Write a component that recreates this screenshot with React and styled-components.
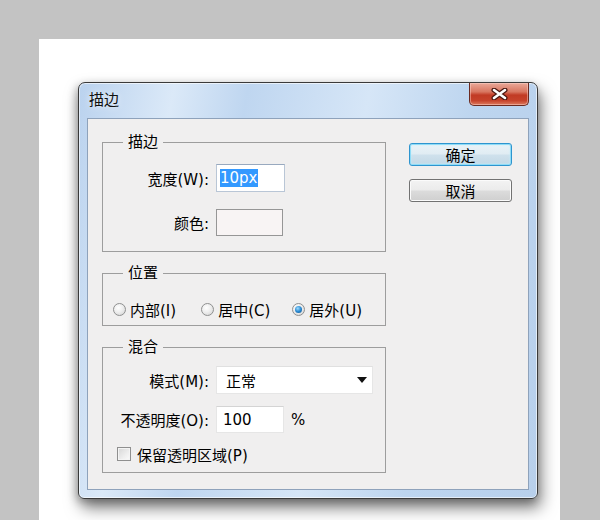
import styled, { createGlobalStyle } from "styled-components";

const GlobalStyle = createGlobalStyle`
  html, body {
    margin: 0;
    padding: 0;
    background: #c3c3c3;
  }
  body {
    font-family: "DejaVu Sans", "Noto Sans CJK SC", sans-serif;
    font-size: 15px;
    color: #000;
  }
`;

const Screen = styled.div`
  width: 600px;
  height: 520px;
  box-sizing: border-box;
  padding: 39px 40px 0 39px;
  background: #c3c3c3;
  overflow: hidden;
`;

const Paper = styled.div`
  height: 481px;
  box-sizing: border-box;
  padding: 43px 0 0 39px;
  background: #fff;
`;

const Window = styled.div`
  width: 460px;
  height: 417px;
  box-sizing: border-box;
  display: flex;
  flex-direction: column;
  padding: 0 8px 8px;
  border: 1px solid #3a3a3a;
  border-radius: 7px 7px 6px 6px;
  background: linear-gradient(
    100deg,
    #bad2ee 0%,
    #dbe9f8 18%,
    #bfd6f0 32%,
    #d6e6f7 55%,
    #bdd5ef 75%,
    #b8d0ec 100%
  );
  box-shadow: 3px 9px 16px rgba(0, 0, 0, 0.5), -2px 3px 9px rgba(0, 0, 0, 0.25),
    inset 0 0 0 1px rgba(255, 255, 255, 0.6);
`;

const TitleBar = styled.div`
  height: 35px;
  display: flex;
  justify-content: space-between;
  align-items: flex-start;
`;

const Title = styled.div`
  padding-left: 2px;
  line-height: 35px;
  font-size: 15px;
  color: #111;
  text-shadow: 0 0 6px rgba(255, 255, 255, 0.9);
`;

const CloseButton = styled.div`
  width: 60px;
  height: 23px;
  box-sizing: border-box;
  display: flex;
  align-items: center;
  justify-content: center;
  border: 1px solid #6b2a20;
  border-top: none;
  border-radius: 0 0 5px 5px;
  background: linear-gradient(
    #eaa999 0%,
    #d87660 40%,
    #c13a24 55%,
    #c6432b 80%,
    #dd7b5f 100%
  );
  box-shadow: inset 0 0 0 1px rgba(255, 220, 210, 0.45);
`;

const Client = styled.div`
  flex: 1;
  display: flex;
  align-items: flex-start;
  padding: 13px 0 0 14px;
  border: 1px solid #8ea2bb;
  background: #f0efef;
`;

const LeftColumn = styled.div`
  width: 284px;
  display: flex;
  flex-direction: column;
`;

const Group = styled.fieldset`
  margin: ${(p) => p.$mt || 0}px 0 0;
  padding: ${(p) => p.$pad};
  min-width: 0;
  border: 1px solid #9d9d9d;
  display: flex;
  flex-direction: column;
`;

const Legend = styled.legend`
  margin-left: 20px;
  padding: 0 5px;
  line-height: 20px;
  font-size: 15px;
`;

const Row = styled.div`
  height: ${(p) => p.$h}px;
  margin-top: ${(p) => p.$mt || 0}px;
  padding-left: ${(p) => p.$pl || 0}px;
  display: flex;
  align-items: center;
`;

const Label = styled.span`
  width: 106px;
  margin-right: 7px;
  text-align: right;
  white-space: nowrap;
`;

const Field = styled.div`
  width: ${(p) => p.$w}px;
  height: ${(p) => p.$h}px;
  box-sizing: border-box;
  display: flex;
  align-items: center;
  padding-left: ${(p) => p.$pl || 5}px;
  border: 1px solid ${(p) => p.$border || "#dcdcdc"};
  border-top-color: ${(p) => p.$borderTop || p.$border || "#c8c8c8"};
  background: ${(p) => p.$bg || "#fff"};
  white-space: nowrap;
`;

const Selected = styled.span`
  background: #3399ff;
  color: #fff;
  line-height: 18px;
`;

const Unit = styled.span`
  margin-left: 7px;
`;

const Select = styled(Field)`
  justify-content: space-between;
  padding-right: 5px;
`;

const RadioItem = styled.label`
  display: flex;
  align-items: center;
  margin-right: ${(p) => p.$mr || 0}px;
  white-space: nowrap;
`;

const Radio = styled.span`
  position: relative;
  width: 13px;
  height: 13px;
  box-sizing: border-box;
  margin-right: 4px;
  border-radius: 50%;
  border: 1px solid #8f9090;
  background: radial-gradient(circle at 40% 35%, #ffffff 0%, #eeeeee 45%, #cfcfcf 100%);

  &::after {
    content: "";
    display: ${(p) => (p.$checked ? "block" : "none")};
    position: absolute;
    left: 2px;
    top: 2px;
    width: 7px;
    height: 7px;
    border-radius: 50%;
    background: radial-gradient(circle at 40% 35%, #9fdcff 0%, #2a8ad2 50%, #0f4f86 100%);
  }
`;

const Checkbox = styled.span`
  width: 14px;
  height: 14px;
  box-sizing: border-box;
  margin-right: 6px;
  border: 1px solid #8f8f8f;
  background: linear-gradient(135deg, #d6d6d6 0%, #eeeeee 60%, #fbfbfb 100%);
  box-shadow: inset 0 0 0 1px #f4f4f4;
`;

const RightColumn = styled.div`
  margin: 11px 0 0 23px;
  display: flex;
  flex-direction: column;
  gap: 13px;
`;

const Button = styled.div`
  width: 103px;
  height: 23px;
  box-sizing: border-box;
  display: flex;
  align-items: center;
  justify-content: center;
  border-radius: 3px;
  border: 1px solid ${(p) => (p.$default ? "#2e95cf" : "#727272")};
  background: ${(p) =>
    p.$default
      ? "linear-gradient(#eaf3f8 0%, #e0ecf3 48%, #cfe1ec 52%, #c2d8e6 100%)"
      : "linear-gradient(#f3f3f3 0%, #ebebeb 48%, #dcdcdc 52%, #cfcfcf 100%)"};
  box-shadow: ${(p) =>
    p.$default
      ? "inset 0 0 0 1px #8fdcf7, inset 0 0 2px 1px #c4eefc"
      : "inset 0 0 0 1px #fbfbfb"};
  font-size: 15px;
`;

function CloseIcon() {
  return (
    <svg width="17" height="12" viewBox="0 0 17 12">
      <path d="M3 2 L14 10 M14 2 L3 10" stroke="#4a1710" strokeWidth="5" strokeLinecap="round" />
      <path d="M3 2 L14 10 M14 2 L3 10" stroke="#ffffff" strokeWidth="2.6" strokeLinecap="round" />
    </svg>
  );
}

function DropArrow() {
  return (
    <svg width="10" height="6" viewBox="0 0 10 6">
      <path d="M0 0 H10 L5 6 Z" fill="#111" />
    </svg>
  );
}

export default function App() {
  return (
    <>
      <GlobalStyle />
      <Screen>
        <Paper>
          <Window>
            <TitleBar>
              <Title>描边</Title>
              <CloseButton>
                <CloseIcon />
              </CloseButton>
            </TitleBar>
            <Client>
              <LeftColumn>
                <Group $pad="12px 0 15px 0">
                  <Legend>描边</Legend>
                  <Row $h={28}>
                    <Label>宽度(W):</Label>
                    <Field $w={69} $h={28} $pl={3} $border="#b9c6d6" $borderTop="#98a9bf">
                      <Selected>10px</Selected>
                    </Field>
                  </Row>
                  <Row $h={27} $mt={17}>
                    <Label>颜色:</Label>
                    <Field $w={67} $h={27} $border="#969696" $bg="#f8f4f4" />
                  </Row>
                </Group>

                <Group $mt={11} $pad="16px 0 6px 0">
                  <Legend>位置</Legend>
                  <Row $h={20} $pl={10}>
                    <RadioItem $mr={25}>
                      <Radio />
                      内部(I)
                    </RadioItem>
                    <RadioItem $mr={22}>
                      <Radio />
                      居中(C)
                    </RadioItem>
                    <RadioItem>
                      <Radio $checked />
                      居外(U)
                    </RadioItem>
                  </Row>
                </Group>

                <Group $mt={11} $pad="9px 0 8px 0">
                  <Legend>混合</Legend>
                  <Row $h={28}>
                    <Label>模式(M):</Label>
                    <Select $w={157} $h={28} $pl={9} $border="#e6e6e6" $borderTop="#e0e0e0">
                      正常
                      <DropArrow />
                    </Select>
                  </Row>
                  <Row $h={27} $mt={12}>
                    <Label>不透明度(O):</Label>
                    <Field $w={68} $h={27} $pl={6} $border="#e6e6e6" $borderTop="#d4d4d4">
                      100
                    </Field>
                    <Unit>%</Unit>
                  </Row>
                  <Row $h={20} $mt={11} $pl={14}>
                    <Checkbox />
                    保留透明区域(P)
                  </Row>
                </Group>
              </LeftColumn>

              <RightColumn>
                <Button $default>确定</Button>
                <Button>取消</Button>
              </RightColumn>
            </Client>
          </Window>
        </Paper>
      </Screen>
    </>
  );
}
